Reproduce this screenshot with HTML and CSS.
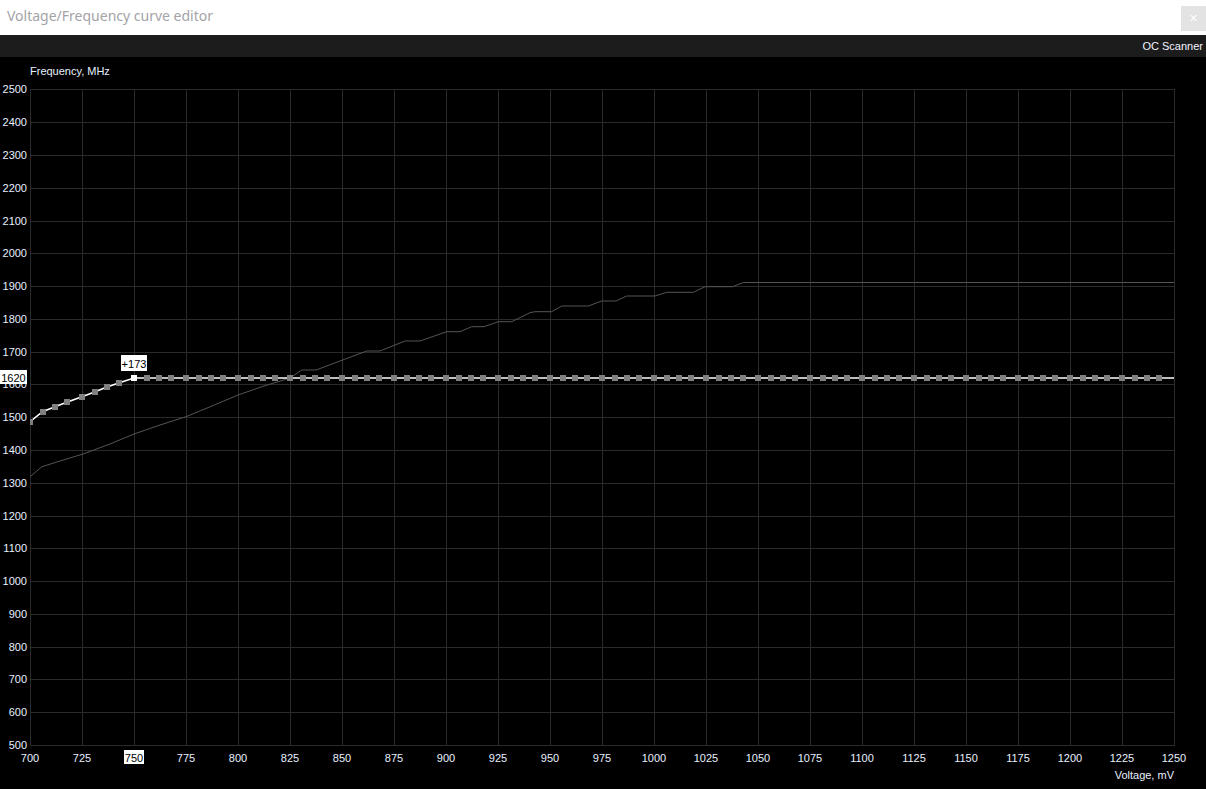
FILE: index.html
```html
<!DOCTYPE html>
<html>
<head>
<meta charset="utf-8">
<title>Voltage/Frequency curve editor</title>
<link rel="stylesheet" href="styles.css">
</head>
<body>
<div class="window">
  <header class="titlebar">
    <span class="title">Voltage/Frequency curve editor</span>
    <button class="close" type="button">×</button>
  </header>
  <div class="toolbar"><span class="oc">OC Scanner</span></div>
  <div class="chart">
    <svg class="plot" width="1206" height="732" viewBox="0 57 1206 732" xmlns="http://www.w3.org/2000/svg">
      <defs>
        <clipPath id="plotclip"><rect x="30" y="60" width="1146" height="690"/></clipPath>
        <clipPath id="under-tag"><rect x="0" y="384" width="30" height="10"/></clipPath>
        <pattern id="sq" x="131" y="375" width="52" height="6" patternUnits="userSpaceOnUse">
          <rect class="sq" x="0" y="0" width="6" height="6"/>
          <rect class="sq" x="12.5" y="0" width="6" height="6"/>
          <rect class="sq" x="25" y="0" width="6" height="6"/>
          <rect class="sq" x="37.4" y="0" width="6" height="6"/>
        </pattern>
      </defs>

      <path class="grid" d="M30.5 89V746M82.5 89V746M134.5 89V746M186.5 89V746M238.5 89V746M290.5 89V746M342.5 89V746M394.5 89V746M446.5 89V746M498.5 89V746M550.5 89V746M602.5 89V746M654.5 89V746M706.5 89V746M758.5 89V746M810.5 89V746M862.5 89V746M914.5 89V746M966.5 89V746M1018.5 89V746M1070.5 89V746M1122.5 89V746M1174.5 89V746
      M30 89.5H1175M30 122.5H1175M30 155.5H1175M30 188.5H1175M30 221.5H1175M30 253.5H1175M30 286.5H1175M30 319.5H1175M30 352.5H1175M30 384.5H1175M30 417.5H1175M30 450.5H1175M30 483.5H1175M30 516.5H1175M30 548.5H1175M30 581.5H1175M30 614.5H1175M30 647.5H1175M30 679.5H1175M30 712.5H1175M30 745.5H1175"/>

      <g class="ylab">
        <text x="27" y="89">2500</text>
        <text x="27" y="122">2400</text>
        <text x="27" y="155">2300</text>
        <text x="27" y="188">2200</text>
        <text x="27" y="221">2100</text>
        <text x="27" y="253">2000</text>
        <text x="27" y="286">1900</text>
        <text x="27" y="319">1800</text>
        <text x="27" y="352">1700</text>
        <text x="27" y="384" clip-path="url(#under-tag)">1600</text>
        <text x="27" y="417">1500</text>
        <text x="27" y="450">1400</text>
        <text x="27" y="483">1300</text>
        <text x="27" y="516">1200</text>
        <text x="27" y="548">1100</text>
        <text x="27" y="581">1000</text>
        <text x="27" y="614">900</text>
        <text x="27" y="647">800</text>
        <text x="27" y="679">700</text>
        <text x="27" y="712">600</text>
        <text x="27" y="745">500</text>
      </g>

      <g class="xlab">
        <text x="30" y="757.5">700</text>
        <text x="82" y="757.5">725</text>
        <text x="186" y="757.5">775</text>
        <text x="238" y="757.5">800</text>
        <text x="290" y="757.5">825</text>
        <text x="342" y="757.5">850</text>
        <text x="394" y="757.5">875</text>
        <text x="446" y="757.5">900</text>
        <text x="498" y="757.5">925</text>
        <text x="550" y="757.5">950</text>
        <text x="602" y="757.5">975</text>
        <text x="654" y="757.5">1000</text>
        <text x="706" y="757.5">1025</text>
        <text x="758" y="757.5">1050</text>
        <text x="810" y="757.5">1075</text>
        <text x="862" y="757.5">1100</text>
        <text x="914" y="757.5">1125</text>
        <text x="966" y="757.5">1150</text>
        <text x="1018" y="757.5">1175</text>
        <text x="1070" y="757.5">1200</text>
        <text x="1122" y="757.5">1225</text>
        <text x="1174" y="757.5">1250</text>
      </g>

      <text class="axis-title" x="30" y="71">Frequency, MHz</text>
      <text class="axis-title end" x="1174" y="775">Voltage, mV</text>

      <g clip-path="url(#plotclip)">
        <polyline class="default-curve" points="30,476.7 42,466.7 60,461 83,454 110,444 134,434 160,425 186,416.7 212,406 238,395 264,386 290,378 301.7,370 316,370 366.7,351 380,351 405,341 420,341 446.7,331.7 460,331.7 471.7,326.7 484,326.7 498.3,321.7 511.7,321.7 530,312.7 535,311.7 551.7,311.7 561.7,306 588.3,306 601.7,301 616,301 626.7,296 655,296 666.7,292.3 693.3,292.3 705,286.7 732.7,286.7 743.3,282.5 1174,282.5"/>
        <polyline class="curve" points="30,421.7 42.5,411.7 55,406.7 67.4,402 82,396.7 94.5,392 107,387 119.4,382.7 134,378 1174,378"/>
        <rect x="144" y="375" width="1020" height="6" fill="url(#sq)"/>
        <rect class="sq" x="27" y="419" width="6" height="6"/>
        <rect class="sq" x="39.5" y="409" width="6" height="6"/>
        <rect class="sq" x="52" y="404" width="6" height="6"/>
        <rect class="sq" x="64.4" y="399" width="6" height="6"/>
        <rect class="sq" x="79" y="394" width="6" height="6"/>
        <rect class="sq" x="91.5" y="389" width="6" height="6"/>
        <rect class="sq" x="104" y="384" width="6" height="6"/>
        <rect class="sq" x="116.4" y="380" width="6" height="6"/>
        <rect class="sq-active" x="131" y="375" width="6" height="6"/>
      </g>

      <rect class="tag" x="0" y="370" width="27" height="14"/>
      <text class="tag-text" x="13.5" y="377.5">1620</text>
      <rect class="tag" x="121" y="355" width="26" height="16"/>
      <text class="tag-text" x="134" y="363.5">+173</text>
      <rect class="tag" x="124" y="750" width="20" height="14"/>
      <text class="tag-text" x="134" y="757.5">750</text>
    </svg>
  </div>
</div>
</body>
</html>
```

FILE: styles.css
```css
html, body {
  margin: 0;
  padding: 0;
  background: #000;
}

body {
  font-family: "Liberation Sans", Arial, sans-serif;
}

.window {
  width: 1206px;
  height: 789px;
  display: flex;
  flex-direction: column;
  overflow: hidden;
}

.titlebar {
  height: 35px;
  flex: none;
  background: #fff;
  display: flex;
  justify-content: space-between;
  align-items: flex-start;
}

.title {
  font-family: "Noto Sans", "Open Sans", sans-serif;
  font-size: 14px;
  line-height: 22px;
  color: #a3a3a8;
  padding: 5px 0 0 7px;
}

.close {
  width: 25px;
  height: 25px;
  margin-top: 6px;
  padding: 0;
  border: 0;
  background: #e3e3e3;
  color: #fff;
  font-family: "Liberation Sans", Arial, sans-serif;
  font-size: 14px;
  line-height: 25px;
}

.toolbar {
  height: 22px;
  flex: none;
  background: #1c1c1c;
  display: flex;
  justify-content: flex-end;
  align-items: center;
  padding-right: 3px;
}

.oc {
  color: #f2f4ff;
  font-size: 11px;
}

.chart {
  flex: 1;
  background: #000;
}

.plot {
  display: block;
}

.grid {
  stroke: #2a2a2a;
  stroke-width: 1;
  fill: none;
  shape-rendering: crispEdges;
}

.ylab text,
.xlab text,
.axis-title,
.tag-text {
  font-family: "Liberation Sans", Arial, sans-serif;
  font-size: 11px;
  dominant-baseline: central;
}

.ylab text {
  fill: #e8f0ff;
  text-anchor: end;
}

.xlab text {
  fill: #e8f0ff;
  text-anchor: middle;
}

.axis-title {
  fill: #e8f0ff;
  text-anchor: start;
}

.axis-title.end {
  text-anchor: end;
}

.default-curve {
  fill: none;
  stroke: #555;
  stroke-width: 1;
}

.curve {
  fill: none;
  stroke: #fff;
  stroke-width: 1.6;
}

.sq {
  fill: #808080;
  shape-rendering: crispEdges;
}

.sq-active {
  fill: #fff;
  shape-rendering: crispEdges;
}

.tag {
  fill: #fff;
}

.tag-text {
  fill: #000;
  text-anchor: middle;
}
```
